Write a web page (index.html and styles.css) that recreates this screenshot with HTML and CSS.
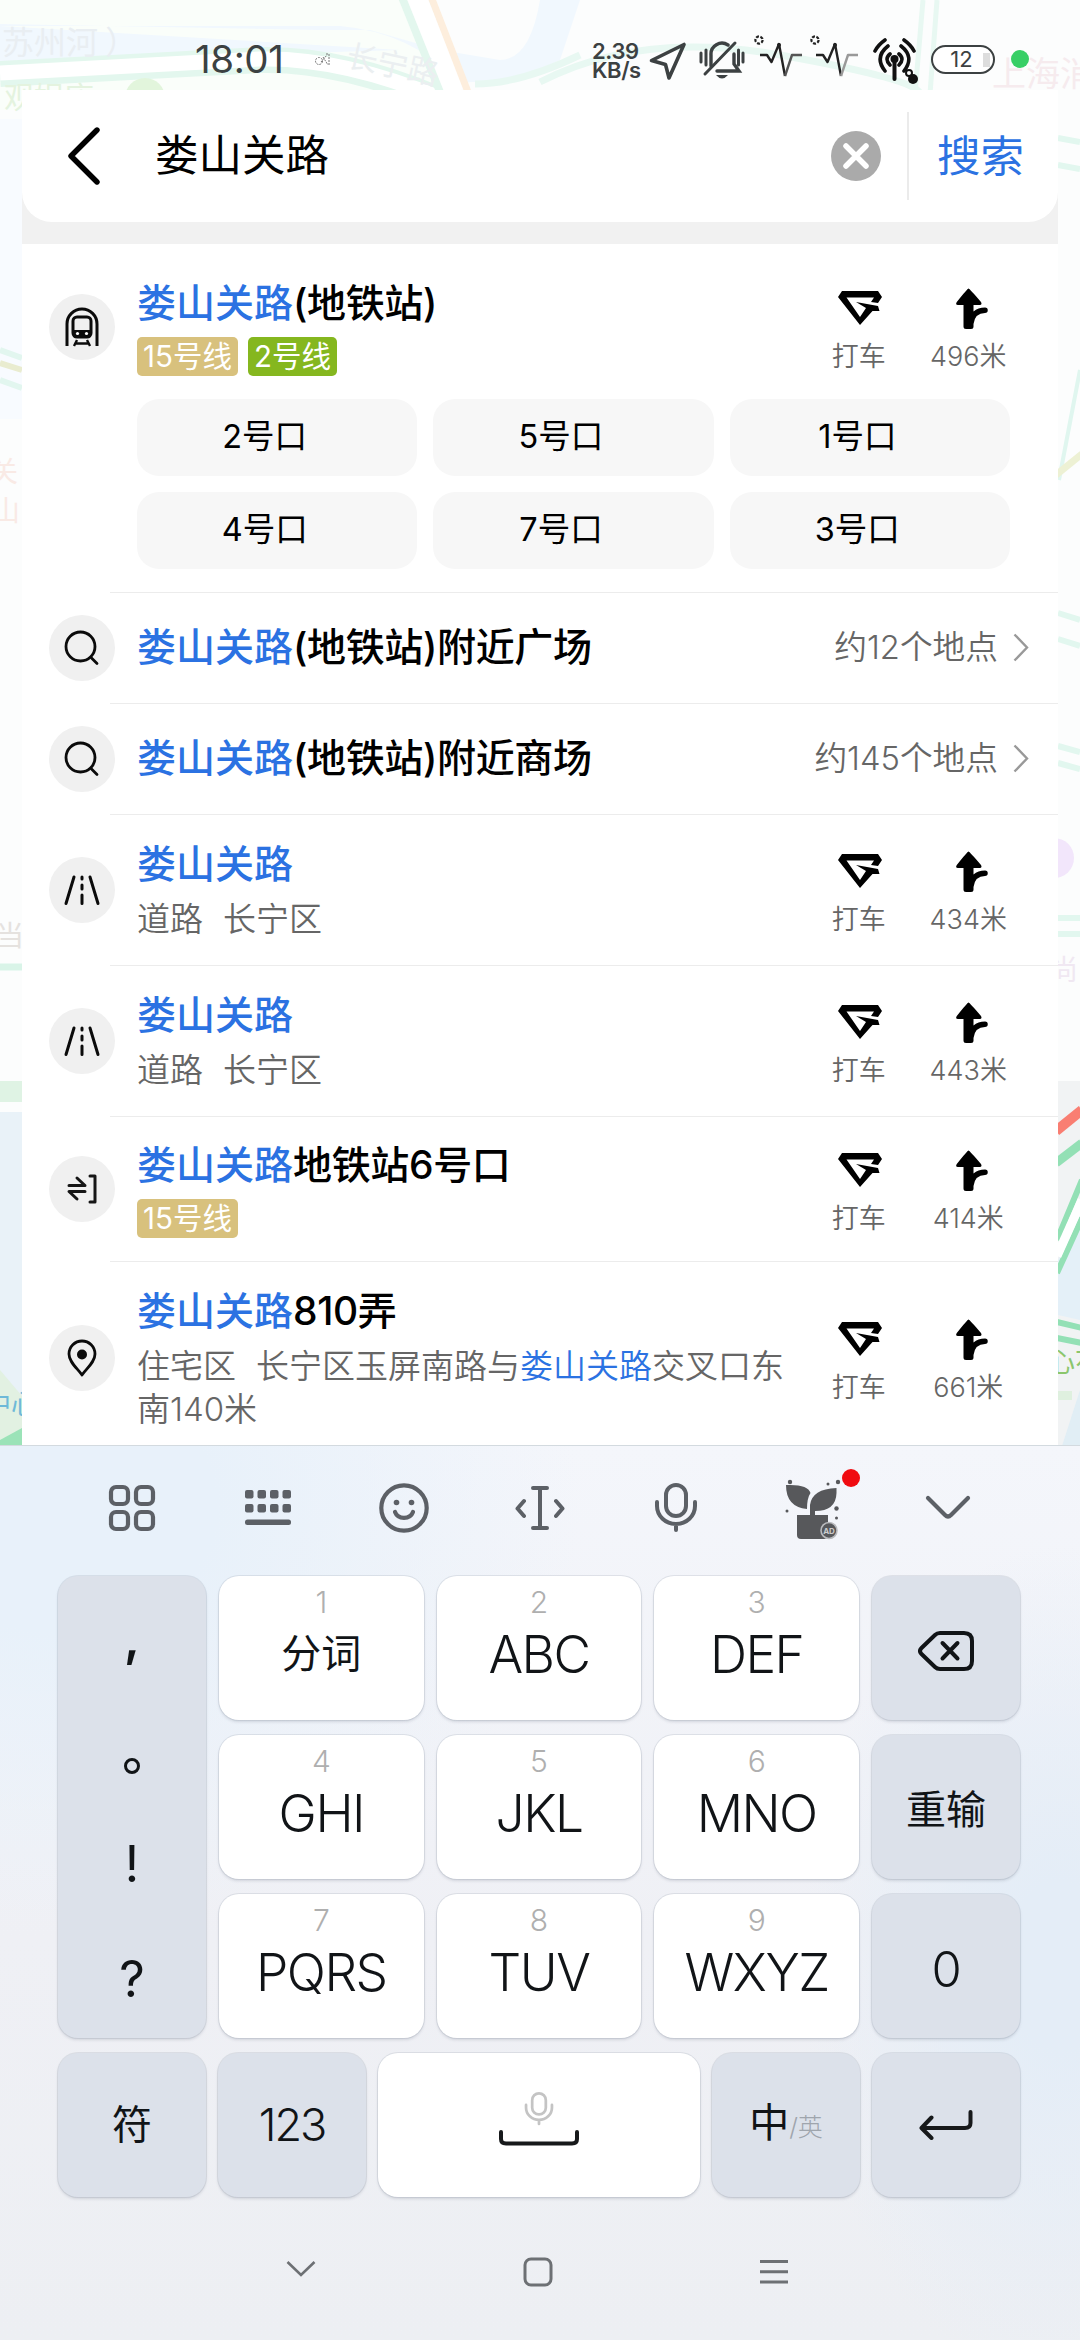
FILE: index.html
```html
<!DOCTYPE html>
<html lang="zh-CN">
<head>
<meta charset="utf-8">
<title>娄山关路</title>
<link rel="stylesheet" href="styles.css">
</head>
<body>
<svg class="defs" aria-hidden="true">
  <symbol id="taxi" viewBox="0 0 44 34"><path fill-rule="evenodd" d="M4 0H40L44 6L40 12L33 11L36 6.500H8.500L22 26L28 17L18 11L40 15L41.500 20H34.500L22 34L0 6Z"/></symbol>
  <symbol id="walk" viewBox="0 0 33 41"><path d="M12.500 0.500Q13.500 0.500 25 14Q26.500 17 23.500 17H17.500V23.500Q22 19.500 29 19.500A2.600 2.600 0 0 1 29 25Q19 25 17.500 36V38.500Q17.500 41 15 41H10Q7.500 41 7.500 38.500V17H2Q-1 17 .8 14Q11.500 .5 12.500 .5Z"/></symbol>
  <symbol id="search" viewBox="0 0 36 36"><g fill="none" stroke="#0b0b0b" stroke-width="2.800" stroke-linecap="round"><circle cx="16.500" cy="16.500" r="14.500"/><path d="M27.500 28L33 33.500"/></g></symbol>
  <symbol id="road" viewBox="0 0 36 32"><g fill="none" stroke="#0b0b0b" stroke-width="3" stroke-linecap="round"><path d="M10 3L2 29.500M26 3L34 29.500M18 3V5M18 11V15M18 21V29.500"/></g></symbol>
  <symbol id="mic" viewBox="0 0 44 50"><g fill="none" stroke="currentColor" stroke-width="4" stroke-linecap="round"><rect x="12" y="2" width="20" height="31" rx="10"/><path d="M3 19V23A19 18 0 0 0 41 23V19M22 42V47"/></g></symbol>
  <symbol id="pulse" viewBox="0 0 52 46"><g fill="none" stroke="#222" stroke-width="2.400" stroke-linejoin="round"><path d="M7 21H14L18.500 28L26 10L32 42"/><path stroke="currentColor" d="M32 42L39 21H49"/><circle cx="6" cy="6" r="3.600" stroke-width="2.200" stroke-dasharray="3 1.500"/></g><circle cx="26" cy="11" r="2" fill="#222"/></symbol>
</svg>

<svg class="map" viewBox="0 0 1080 1446" aria-hidden="true">
  <rect width="1080" height="1446" fill="#fcfdfd"/>
  <path d="M0 0H400L470 110H0Z" fill="#fafefa"/>
  <path d="M0 26H340Q410 32 460 82Q510 84 560 60L580 0H540Q530 60 500 60L440 50L370 30H320L0 24V62L400 50Z" fill="#f1f8fe"/>
  <g fill="none" stroke-linecap="butt">
    <path d="M0 74L260 60Q340 58 440 100" stroke="#e3f7ee" stroke-width="26"/>
    <path d="M0 73L260 59Q340 57 440 98" stroke="#fff" stroke-width="15"/>
    <path d="M411 -10L452 92" stroke="#e3f7ee" stroke-width="30"/>
    <path d="M414 -10L455 92" stroke="#fff" stroke-width="20"/>
    <path d="M430 -6L468 92" stroke="#fdeedd" stroke-width="7"/>
    <path d="M475 84Q520 84 580 55M540 82Q640 30 780 55T920 94" stroke="#e8f8f2" stroke-width="7"/>
    <path d="M923 0L915 94M937 0L930 94" stroke="#e8f8f2" stroke-width="5"/>
  </g>
  <circle cx="145" cy="98" r="20" fill="#e2f5dc"/>
  <g font-family="'Noto Sans CJK SC',sans-serif">
    <text x="2" y="54" font-size="32" fill="#e9eef2">苏州河 ）</text>
    <text x="4" y="108" font-size="30" fill="#e4f3df">观娱座</text>
    <text x="345" y="66" font-size="31" fill="#ebeff1" transform="rotate(12 345 66)">长宁路</text>
    <text x="992" y="86" font-size="34" fill="#f6ebee">上海消</text>
  </g>
  <rect y="119" width="22" height="300" fill="#f8fbff"/>
  <path d="M0 350L22 358M0 380L22 388" stroke="#e2f6ef" stroke-width="6"/>
  <path d="M0 363L22 370" stroke="#e9ecd0" stroke-width="6"/>
  <g font-family="'Noto Sans CJK SC',sans-serif" font-size="28">
    <text x="-10" y="482" fill="#f9eae5">关</text><text x="-8" y="521" fill="#f9eae5">山</text>
    <text x="-4" y="946" fill="#e5e2df">当</text>
    <text x="1050" y="980" fill="#f0e8f2">尚</text>
  </g>
  <path d="M0 967H22" stroke="#d9f4e8" stroke-width="7"/>
  <path d="M0 1081H22V1102H0Z" fill="#dff3e4"/>
  <path d="M0 1112H22V1446H0Z" fill="#e9f2f8"/>
  <path d="M0 1370L22 1396V1446H0Z" fill="#e2f1e2"/>
  <path d="M0 1440L22 1428V1446H0Z" fill="#9be3b8"/>
  <text x="-16" y="1414" font-size="27" fill="#6eb9d8" font-family="'Noto Sans CJK SC',sans-serif">中心</text>
  <g fill="none">
    <path d="M1058 138L1080 142M1058 165L1080 169M1058 613L1080 620M1058 639L1080 646M1058 746L1080 752M1058 763L1080 769M1058 918H1080M1058 934H1080" stroke="#e2f7ef" stroke-width="6"/>
    <path d="M1080 370L1059 480" stroke="#e0f6ef" stroke-width="4"/>
    <path d="M1056 475L1082 454" stroke="#edf1d4" stroke-width="7"/>
  </g>
  <circle cx="1054" cy="858" r="20" fill="#f2e6fb"/>
  <path d="M1058 1081H1080V1446H1058Z" fill="#f1f3f4"/>
  <path d="M1080 1210V1320L1058 1315V1260Z" fill="#e4f0f8"/>
  <path d="M1056 1131L1082 1110" stroke="#f97e72" stroke-width="10"/>
  <path d="M1056 1163L1082 1143" stroke="#93e0b5" stroke-width="9"/>
  <path d="M1057 1240L1082 1180M1057 1273L1082 1218" stroke="#93e0b5" stroke-width="6"/>
  <path d="M1057 1256L1082 1200" stroke="#fff" stroke-width="9"/>
  <path d="M1057 1322L1082 1328M1057 1338L1082 1343" stroke="#93e0b5" stroke-width="6"/>
  <text x="1048" y="1372" font-size="27" fill="#8bc66c" font-family="'Noto Sans CJK SC',sans-serif">心花</text>
  <path d="M1058 1391H1072V1400H1058Z" fill="#dff0df"/>
  <path d="M1080 1390V1446H1062Z" fill="#e1eef5"/>
</svg>

<div class="screen">
  <header class="status">
    <span class="clock">18:01</span>
    <svg class="tiny" width="16" height="14" viewBox="0 0 16 14"><g fill="none" stroke="#777" stroke-width="1" stroke-dasharray="2 1"><circle cx="5" cy="8" r="3.500"/><path d="M7 9L13 2M9 4L14 12M12 1H15V12"/></g></svg>
    <div class="speed"><span>2.39</span><span>KB/s</span></div>
    <svg class="s-nav" width="38" height="40" viewBox="0 0 38 40"><path d="M35 3.500L20 37L16.500 23.500L2.500 19.500Z" fill="none" stroke="#3c4142" stroke-width="3.600" stroke-linejoin="round"/></svg>
    <svg class="s-bell" width="46" height="40" viewBox="0 0 46 40"><g fill="none" stroke="#3c4142" stroke-width="3.400" stroke-linecap="round"><path d="M12 26V15A11 11 0 0 1 29 5M35 14V24L40 31H18"/><path d="M36 3L6 34M2 13V22M7 10V25M39.500 10V25M44 13V22" stroke-width="3"/></g><path d="M17 35H29Q23 42 17 35Z" fill="#3c4142"/></svg>
    <svg class="s-p1" width="52" height="46"><use href="#pulse"/></svg>
    <svg class="s-p2" width="52" height="46"><use href="#pulse"/></svg>
    <svg class="s-ant" width="46" height="48" viewBox="0 0 46 48"><g fill="none" stroke="#111" stroke-width="3.600" stroke-linecap="round"><path d="M12 3Q5 8 2 14M31 3Q38 8 41 14M15 9Q1 20 12 34M28 9Q42 20 31 34M17 17Q11 22 17 28M26 17Q32 22 26 28"/><path d="M21.500 24V42" stroke-width="4"/></g><circle cx="21.500" cy="22" r="4" fill="#111"/><circle cx="36" cy="36" r="3" fill="none" stroke="#111" stroke-width="2"/><circle cx="40" cy="42" r="5" fill="#111"/></svg>
    <span class="battery">12</span>
    <span class="dot"></span>
  </header>

  <main class="panel">
    <div class="searchbar">
      <svg class="back" width="34" height="58" viewBox="0 0 34 58"><path d="M30 3L4 29L30 55" fill="none" stroke="#000" stroke-width="5.400" stroke-linecap="round" stroke-linejoin="round"/></svg>
      <span class="query">娄山关路</span>
      <svg class="clear" width="50" height="50" viewBox="0 0 50 50"><circle cx="25" cy="25" r="25" fill="#aaa"/><path d="M15 15L35 35M35 15L15 35" stroke="#fff" stroke-width="5.500" stroke-linecap="round"/></svg>
      <span class="go">搜索</span>
    </div>
    <div class="list">
      <section class="row first">
        <div class="line">
          <span class="badge"><svg width="34" height="40" viewBox="0 0 34 40"><g fill="none" stroke="#0b0b0b" stroke-width="3"><path d="M2 39V17A15 15 0 0 1 32 17V39"/><rect x="8" y="10" width="18" height="20" rx="4"/></g><path d="M8 23H26V28Q26 31 23 31H11Q8 31 8 28Z" fill="#0b0b0b"/><circle cx="12.500" cy="26.500" r="1.600" fill="#fff"/><circle cx="21.500" cy="26.500" r="1.600" fill="#fff"/><path d="M12 33L9 39M22 33L25 39M11 36.500H23" stroke="#0b0b0b" stroke-width="2.400"/></svg></span>
          <div class="info"><h2><em>娄山关路</em>(地铁站)</h2><div class="tags"><span class="tag l15">15号线</span><span class="tag l2">2号线</span></div></div>
          <div class="act"><svg width="44" height="34"><use href="#taxi"/></svg><span>打车</span></div>
          <div class="act"><svg width="33" height="41"><use href="#walk"/></svg><span>496米</span></div>
        </div>
        <div class="exits"><span>2号口</span><span>5号口</span><span>1号口</span><span>4号口</span><span>7号口</span><span>3号口</span></div>
      </section>
      <section class="row line near">
        <span class="badge"><svg width="36" height="36"><use href="#search"/></svg></span>
        <div class="info"><h2><em>娄山关路</em>(地铁站)附近广场</h2></div>
        <span class="count">约12个地点</span><svg class="more" width="16" height="29" viewBox="0 0 16 29"><path d="M1.500 1.500L14 14.500L1.500 27.500" fill="none" stroke="#999" stroke-width="2.400"/></svg>
      </section>
      <section class="row line near">
        <span class="badge"><svg width="36" height="36"><use href="#search"/></svg></span>
        <div class="info"><h2><em>娄山关路</em>(地铁站)附近商场</h2></div>
        <span class="count">约145个地点</span><svg class="more" width="16" height="29" viewBox="0 0 16 29"><path d="M1.500 1.500L14 14.500L1.500 27.500" fill="none" stroke="#999" stroke-width="2.400"/></svg>
      </section>
      <section class="row line place">
        <span class="badge"><svg width="36" height="32"><use href="#road"/></svg></span>
        <div class="info"><h2><em>娄山关路</em></h2><p><span class="kind">道路</span>长宁区</p></div>
        <div class="act"><svg width="44" height="34"><use href="#taxi"/></svg><span>打车</span></div>
        <div class="act"><svg width="33" height="41"><use href="#walk"/></svg><span>434米</span></div>
      </section>
      <section class="row line place">
        <span class="badge"><svg width="36" height="32"><use href="#road"/></svg></span>
        <div class="info"><h2><em>娄山关路</em></h2><p><span class="kind">道路</span>长宁区</p></div>
        <div class="act"><svg width="44" height="34"><use href="#taxi"/></svg><span>打车</span></div>
        <div class="act"><svg width="33" height="41"><use href="#walk"/></svg><span>443米</span></div>
      </section>
      <section class="row line exit">
        <span class="badge"><svg width="30" height="30" viewBox="0 0 30 30"><g fill="none" stroke="#161616" stroke-width="3" stroke-linecap="round" stroke-linejoin="round"><path d="M2 11.500H18L10 4M18 17.500H2L10 25M23 2H28V28H23"/></g></svg></span>
        <div class="info"><h2><em>娄山关路</em>地铁站6号口</h2><div class="tags"><span class="tag l15">15号线</span></div></div>
        <div class="act"><svg width="44" height="34"><use href="#taxi"/></svg><span>打车</span></div>
        <div class="act"><svg width="33" height="41"><use href="#walk"/></svg><span>414米</span></div>
      </section>
      <section class="row line addr">
        <span class="badge"><svg width="30" height="38" viewBox="0 0 30 38"><path d="M15 36C10 29 2 23 2 15A13 13 0 0 1 28 15C28 23 20 29 15 36Z" fill="none" stroke="#0b0b0b" stroke-width="2.800" stroke-linejoin="round"/><circle cx="15" cy="15.500" r="5" fill="#0b0b0b"/></svg></span>
        <div class="info"><h2><em>娄山关路</em>810弄</h2><p><span class="kind">住宅区</span>长宁区玉屏南路与<em>娄山关路</em>交叉口东南140米</p></div>
        <div class="act"><svg width="44" height="34"><use href="#taxi"/></svg><span>打车</span></div>
        <div class="act"><svg width="33" height="41"><use href="#walk"/></svg><span>661米</span></div>
      </section>
    </div>
  </main>

  <footer class="keyboard">
    <div class="toolbar">
      <span><svg width="48" height="48" viewBox="0 0 48 48"><g fill="none" stroke="#5c6066" stroke-width="4.200"><rect x="3" y="3" width="17" height="17" rx="5"/><rect x="28" y="3" width="17" height="17" rx="5"/><rect x="3" y="28" width="17" height="17" rx="5"/><rect x="28" y="28" width="17" height="17" rx="5"/></g></svg></span>
      <span><svg width="46" height="36" viewBox="0 0 46 36"><g fill="#5c6066"><rect x="0" y="0" width="8.500" height="8.500" rx="2"/><rect x="12.500" y="0" width="8.500" height="8.500" rx="2"/><rect x="25" y="0" width="8.500" height="8.500" rx="2"/><rect x="37.500" y="0" width="8.500" height="8.500" rx="2"/><rect x="0" y="14" width="8.500" height="8.500" rx="2"/><rect x="12.500" y="14" width="8.500" height="8.500" rx="2"/><rect x="25" y="14" width="8.500" height="8.500" rx="2"/><rect x="37.500" y="14" width="8.500" height="8.500" rx="2"/><rect x="0" y="29.500" width="46" height="5.500" rx="2.500"/></g></svg></span>
      <span><svg width="50" height="50" viewBox="0 0 50 50"><g fill="none" stroke="#5c6066" stroke-width="4.200" stroke-linecap="round"><circle cx="25" cy="25" r="22.700"/><path d="M16 29A9.500 8.500 0 0 0 34 29"/></g><circle cx="17.500" cy="19.500" r="2.800" fill="#5c6066"/><circle cx="32.500" cy="19.500" r="2.800" fill="#5c6066"/></svg></span>
      <span><svg width="50" height="44" viewBox="0 0 50 44"><g fill="none" stroke="#5c6066" stroke-width="4" stroke-linecap="round" stroke-linejoin="round"><path d="M18 2H32M18 42H32M25 2V42M9 15L2.500 22.500L9 30M41 15L47.500 22.500L41 30"/></g></svg></span>
      <span class="tmic"><svg width="44" height="50"><use href="#mic"/></svg></span>
      <span class="plant"><svg width="62" height="64" viewBox="0 0 62 64"><g fill="#57585b"><path d="M3 8Q25 7 27.500 16Q24 21 24 32Q3 30 3 8Z"/><path d="M53.500 11V16Q53 34 32 34V38H45V58Q45 62 41 62H18Q14 62 14 58V38H27V28Q29 12 53.500 11Z"/><circle cx="7" cy="5" r="2.200"/><circle cx="45" cy="7" r="1.500"/><circle cx="55" cy="5" r="2.200"/><circle cx="4" cy="34" r="1.500"/><circle cx="53.500" cy="31.500" r="2.200"/><circle cx="53.500" cy="41" r="1.500"/><circle cx="46" cy="53.500" r="8" stroke="#b9babd" stroke-width="1.600"/></g><text x="46" y="56.500" font-size="8" text-anchor="middle" fill="#ccc" font-family="Inter,sans-serif" font-weight="700">AD</text></svg><i></i></span>
      <span><svg width="46" height="26" viewBox="0 0 46 26"><path d="M3 3L20 20Q23 23 26 20L43 3" fill="none" stroke="#5c6066" stroke-width="4.200" stroke-linecap="round"/></svg></span>
    </div>
    <div class="keys">
      <div class="key dark punct"><span class="comma">,</span><svg width="18" height="18" viewBox="0 0 18 18"><circle cx="9" cy="9" r="6.500" fill="none" stroke="#111417" stroke-width="3"/></svg><span>!</span><span>?</span></div>
      <div class="key"><small>1</small><b class="cn">分词</b></div>
      <div class="key"><small>2</small><b>ABC</b></div>
      <div class="key"><small>3</small><b>DEF</b></div>
      <div class="key dark"><svg width="56" height="40" viewBox="0 0 56 40"><g fill="none" stroke="#111417" stroke-width="4" stroke-linecap="round" stroke-linejoin="round"><path d="M22 2H46Q54 2 54 10V30Q54 38 46 38H22Q19 38 17 36L3.500 23Q.5 20 3.500 17L17 4Q19 2 22 2Z"/><path d="M24.500 12L39.500 27.500M39.500 12L24.500 27.500"/></g></svg></div>
      <div class="key"><small>4</small><b>GHI</b></div>
      <div class="key"><small>5</small><b>JKL</b></div>
      <div class="key"><small>6</small><b>MNO</b></div>
      <div class="key dark"><b class="cn">重输</b></div>
      <div class="key"><small>7</small><b>PQRS</b></div>
      <div class="key"><small>8</small><b>TUV</b></div>
      <div class="key"><small>9</small><b>WXYZ</b></div>
      <div class="key dark"><b class="zero">0</b></div>
    </div>
    <div class="keys bottom">
      <div class="key dark"><b class="cn">符</b></div>
      <div class="key dark"><b class="num">123</b></div>
      <div class="key space"><svg class="smic" width="30" height="38"><use href="#mic"/></svg><svg width="80" height="16" viewBox="0 0 80 16"><path d="M2 2V9Q2 13.500 7 13.500H73Q78 13.500 78 9V2" fill="none" stroke="#17191b" stroke-width="4" stroke-linecap="round"/></svg></div>
      <div class="key dark lang"><b class="cn">中</b><small>/英</small></div>
      <div class="key dark enter"><svg width="54" height="30" viewBox="0 0 54 30"><path d="M51.500 2V13Q51.500 18 46 18H3M12.500 7.500L2.500 18L12.500 28" fill="none" stroke="#17191b" stroke-width="4" stroke-linecap="round" stroke-linejoin="round"/></svg></div>
    </div>
    <nav class="sysnav">
      <svg width="30" height="18" viewBox="0 0 30 18"><path d="M1.500 2L15 15L28.500 2" fill="none" stroke="#6d7074" stroke-width="2.600"/></svg>
      <svg width="30" height="30" viewBox="0 0 30 30"><rect x="2" y="2" width="26" height="26" rx="6" fill="none" stroke="#6d7074" stroke-width="3"/></svg>
      <svg width="28" height="26" viewBox="0 0 28 26"><path d="M0 2.500H28M0 12.700H28M0 23H28" stroke="#6d7074" stroke-width="3"/></svg>
    </nav>
  </footer>
</div>
</body>
</html>
```
FILE: styles.css
```css
* { box-sizing: border-box; }
body {
  margin: 0;
  width: 1080px;
  height: 2340px;
  overflow: hidden;
  position: relative;
  font-family: Inter, "Noto Sans CJK SC", sans-serif;
  color: #000;
}
svg { display: block; flex: none; }
h2, p { margin: 0; }
em { font-style: normal; color: #2b72e2; }
b { font-weight: 350; }

.defs { position: absolute; width: 0; height: 0; }
.map { position: absolute; left: 0; top: 0; width: 1080px; height: 1446px; }
.screen { position: relative; display: flex; flex-direction: column; height: 2340px; }

/* status bar */
.status { height: 90px; display: flex; align-items: flex-start; padding-left: 195px; color: #3c4142; flex: none; }
.clock { font-size: 38.500px; line-height: 46px; margin-top: 36px; width: 119px; letter-spacing: -.4px; white-space: nowrap; }
.tiny { margin-top: 53px; }
.speed { display: flex; flex-direction: column; margin: 42px 0 0 262px; width: 57px; font-weight: 600; font-size: 22px; line-height: 18.5px; }
.speed span { letter-spacing: -.4px; }
.s-nav { margin-top: 41px; }
.s-bell { margin: 40px 0 0 12px; }
.s-p1 { margin: 34px 0 0 8px; color: #555; }
.s-p2 { margin: 34px 0 0 4px; color: #999; }
.s-ant { margin: 37px 0 0 12px; }
.battery { margin: 45px 0 0 12px; width: 64px; height: 29px; border: 2.500px solid #3c4142; border-radius: 15px; font-size: 22px; line-height: 24px; text-align: center; padding-right: 3px; background: linear-gradient(#ddd, #ddd) 50px 50% / 7px 14px no-repeat, #fff; }
.dot { margin: 50px 0 0 16px; width: 18px; height: 18px; border-radius: 50%; background: #38cf66; }

/* search panel */
.panel { width: 1036px; height: 1355px; margin-left: 22px; overflow: hidden; background: linear-gradient(#fff 0 100px, #f1f1f1 100px); flex: none; }
.searchbar { height: 132px; background: #fff; border-radius: 0 0 30px 30px; display: flex; align-items: center; padding-left: 45px; }
.query { font-size: 43.500px; line-height: 60px; margin: -2px 0 0 54px; flex: 1; white-space: nowrap; }
.clear { margin-right: 26px; }
.go { color: #2b72e2; font-size: 43.500px; line-height: 88px; border-left: 2px solid #ebebeb; padding-left: 28px; width: 151px; white-space: nowrap; }

.list { margin-top: 22px; background: #fff; }
.row { background: #fff; }
.row + .row { background: linear-gradient(#ececec, #ececec) 88px 0 / 948px 1px no-repeat #fff; }
.line { display: flex; align-items: center; padding: 0 35px 0 27px; }
.first { height: 348px; padding-top: 34px; }
.first .line { height: 98px; }
.badge { width: 66px; height: 66px; border-radius: 50%; background: #f0f0f0; display: flex; align-items: center; justify-content: center; flex: none; }
.info { margin-left: 22px; flex: 1; min-width: 0; }
.info h2 { font-size: 39px; line-height: 50px; font-weight: 500; white-space: nowrap; letter-spacing: -.35px; }
.info h2 em { letter-spacing: 0; }
.info p { margin-top: 9px; font-size: 33px; line-height: 43px; color: #666; font-weight: 350; }
.kind { margin-right: 20px; }
.tags { display: flex; gap: 10px; margin-top: 9px; height: 39px; }
.tag { height: 39px; line-height: 38px; font-size: 29.500px; color: #fff; padding: 0 6px; border-radius: 5px; white-space: nowrap; }
.l15 { background: #d8c17d; }
.l2 { background: #85b71f; }
.act { width: 109.500px; display: flex; flex-direction: column; align-items: center; justify-content: flex-end; height: 98px; padding-bottom: 1px; flex: none; }
.act svg { margin-bottom: 10px; }
.act svg[width="44"] { margin: 0 0 14px 2px; }
.act svg[width="33"] { margin-left: 8px; }
.act span { font-size: 27px; line-height: 36px; color: #666; font-weight: 350; white-space: nowrap; }
.exits { margin: 23px 48px 0 115px; display: grid; grid-template-columns: repeat(3, 1fr); gap: 16px; }
.exits span { height: 77px; line-height: 76px; border-radius: 22px; background: #f7f7f7; font-size: 32.500px; text-align: center; padding-right: 25px; }
.near { height: 111px; padding-right: 29px; }
.near h2 { margin-top: -2px; }
.count { font-size: 32.700px; line-height: 44px; margin-top: -2px; color: #666; font-weight: 350; margin-right: 15px; white-space: nowrap; }
.place { height: 151px; }
.exit { height: 145px; }
.addr { height: 194px; }

/* keyboard */
.keyboard { flex: 1; border-top: 1.500px solid #d3dadf; background:
  radial-gradient(520px 420px at 60px 60px, #e8f1fa 30%, rgba(232,241,250,0)),
  radial-gradient(260px 420px at 1060px 520px, #e4edf7 20%, rgba(228,237,247,0)),
  linear-gradient(#f4f6fb, #eff0f5 55%, #edeff3); }
.toolbar { height: 130px; padding: 0 64px 6px; display: grid; grid-template-columns: repeat(7, 1fr); align-items: center; justify-items: center; }
.toolbar span { position: relative; }
.tmic { color: #5c6066; }
.plant svg { margin: 2px 0 0 4px; }
.plant i { position: absolute; left: 63px; top: -6px; width: 18px; height: 18px; border-radius: 50%; background: #f00b10; }
.keys { margin: 0 60px 0 58px; display: grid; grid-template-columns: 148px repeat(3, 1fr) 148px; grid-auto-rows: 144px; gap: 15px 13px; }
.bottom { grid-template-columns: 148px 148px 1fr 148px 148px; column-gap: 12px; margin-top: 15px; }
.key { background: #fff; border-radius: 20px; box-shadow: 0 0 0 1px rgba(150,160,175,.22), 0 2px 3px rgba(90,100,120,.2); display: flex; flex-direction: column; align-items: center; justify-content: center; color: #111417; padding-bottom: 23px; }
.key small { font-size: 30px; line-height: 34px; font-weight: 300; color: #afafaf; }
.key b { font-size: 51.500px; line-height: 70px; letter-spacing: -1.500px; }
.key b.cn { font-size: 40px; font-weight: 400; letter-spacing: 0; }
.key b.zero { font-size: 49px; }
.key b.num { font-size: 45px; letter-spacing: -2px; }
.key.dark { background: #dce1ea; padding: 5px 0 0; }
.key.dark .zero { margin-top: 3px; }
.key.punct { grid-row: span 3; justify-content: flex-start; font-size: 50px; line-height: 60px; padding-top: 32px; }
.punct .comma { font-weight: 600; }
.punct svg { margin: 89px 0 59px; }
.punct span + span { margin-top: 55px; }
.bottom .key.dark { padding: 0; }
.key.lang { flex-direction: row; }
.key.lang b { margin-top: -5px; }
.key.lang small { font-size: 25px; color: #9fa5ad; margin-top: 4px; }
.key.space { padding-bottom: 14px; }
.smic { color: #c4c4c4; margin-bottom: 2px; }
.sysnav { display: flex; align-items: center; justify-content: space-between; padding: 0 292px 0 286px; margin-top: 60px; height: 30px; }
.sysnav svg:first-child { margin-top: -6px; }
```
